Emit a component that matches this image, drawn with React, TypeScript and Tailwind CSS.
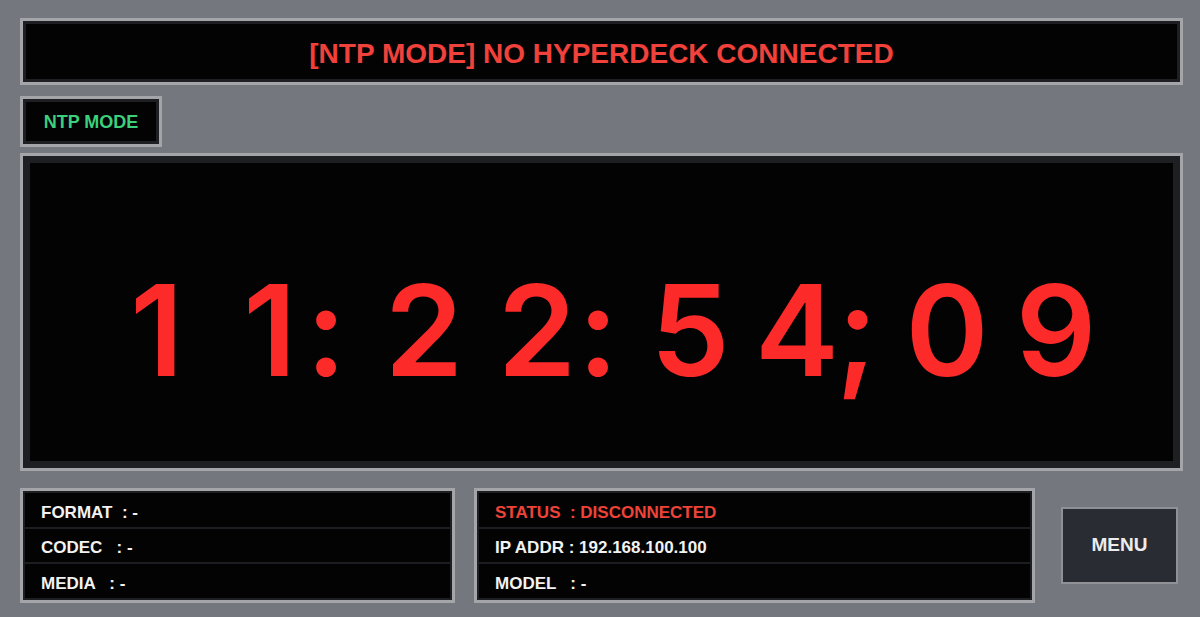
import React from "react";

type Glyph = { ch: string; w: number; ml: number };

// clock glyph cells, margins tuned to the reference spacing
const CLOCK: Glyph[] = [
  { ch: "1", w: 80, ml: 0 },
  { ch: "1", w: 80, ml: 33 },
  { ch: ":", w: 40, ml: -4 },
  { ch: "2", w: 80, ml: 38 },
  { ch: "2", w: 80, ml: 33 },
  { ch: ":", w: 40, ml: 1 },
  { ch: "5", w: 80, ml: 32 },
  { ch: "4", w: 80, ml: 27 },
  { ch: ";", w: 40, ml: 0 },
  { ch: "0", w: 80, ml: 30 },
  { ch: "9", w: 80, ml: 29 },
];

const LEFT_ROWS = ["FORMAT  : -", "CODEC   : -", "MEDIA   : -"];

function Bezel({
  className,
  inner = "border-[3px]",
  children,
}: {
  className?: string;
  inner?: string;
  children: React.ReactNode;
}) {
  return (
    <div className={`border-[3px] border-[#a3a5a9] ${className ?? ""}`}>
      <div className={`h-full w-full border-[#1e1f23] bg-[#030303] ${inner}`}>
        {children}
      </div>
    </div>
  );
}

function InfoRow({ text, red }: { text: string; red?: boolean }) {
  return (
    <div
      className={`flex flex-1 items-center whitespace-pre pl-4 pt-[5px] text-[17px] font-bold ${
        red ? "text-[#ef4338]" : "text-[#f2f2f2]"
      }`}
    >
      {text}
    </div>
  );
}

export default function App() {
  return (
    <div
      className="flex h-[617px] w-full flex-col bg-[#74777e] pl-[20px] pr-[17px] pt-[18px]"
      style={{ fontFamily: '"Liberation Sans", Arial, sans-serif' }}
    >
      <Bezel className="h-[67px]">
        <div className="flex h-full items-center justify-center pt-[4px] text-[28px] font-bold text-[#f0413b]">
          [NTP MODE] NO HYPERDECK CONNECTED
        </div>
      </Bezel>

      <Bezel className="mt-[11px] h-[51px] w-[142px]">
        <div className="flex h-full items-center justify-center pt-[2px] text-[18px] font-bold text-[#3ccf7c]">
          NTP MODE
        </div>
      </Bezel>

      <Bezel className="mt-[6px] h-[318px]" inner="border-[7px]">
        <div
          className="flex h-full items-start pl-[87px] pt-[104px] text-[126px] font-semibold leading-none text-[#fd2a2a]"
          style={{ fontFamily: "Inter, sans-serif" }}
        >
          {CLOCK.map((g, i) => (
            <span
              key={i}
              className="flex shrink-0 justify-center"
              style={{ width: g.w, marginLeft: g.ml }}
            >
              {g.ch}
            </span>
          ))}
        </div>
      </Bezel>

      <div className="mt-[17px] flex h-[115px] items-center">
        <Bezel className="h-full w-[435px]" inner="border-2">
          <div className="flex h-full flex-col divide-y-2 divide-[#1c1d21]">
            {LEFT_ROWS.map((r) => (
              <InfoRow key={r} text={r} />
            ))}
          </div>
        </Bezel>

        <Bezel className="ml-[19px] h-full w-[561px]" inner="border-2">
          <div className="flex h-full flex-col divide-y-2 divide-[#1c1d21]">
            <InfoRow text="STATUS  : DISCONNECTED" red />
            <InfoRow text="IP ADDR : 192.168.100.100" />
            <InfoRow text="MODEL   : -" />
          </div>
        </Bezel>

        <button
          type="button"
          className="ml-[26px] flex h-[77px] w-[117px] items-center justify-center border-2 border-[#8f9196] bg-[#2a2c33] text-[19px] font-bold text-[#ececee]"
        >
          MENU
        </button>
      </div>
    </div>
  );
}
